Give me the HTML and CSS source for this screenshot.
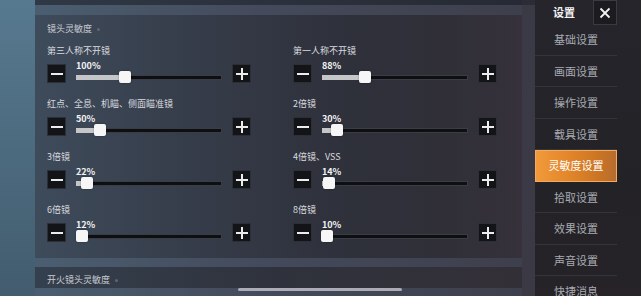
FILE: index.html
```html
<!DOCTYPE html>
<html lang="zh">
<head>
<meta charset="utf-8">
<link rel="stylesheet" href="styles.css">
</head>
<body>
<div class="edge"></div>
<main class="main">
  <div class="prev"></div>
  <section class="panel">
    <h2 class="title">镜头灵敏度<span class="dot"></span></h2>
    <div class="grid">
      <div class="row">
        <div class="label">第三人称不开镜</div>
        <div class="ctrl">
          <div class="btn minus"></div>
          <div class="slider"><div class="val">100%</div><div class="track"><div class="fill" style="width:33.3%"></div><div class="thumb" style="left:33.3%"></div></div></div>
          <div class="btn plus"></div>
        </div>
      </div>
      <div class="row">
        <div class="label">第一人称不开镜</div>
        <div class="ctrl">
          <div class="btn minus"></div>
          <div class="slider"><div class="val">88%</div><div class="track"><div class="fill" style="width:29.3%"></div><div class="thumb" style="left:29.3%"></div></div></div>
          <div class="btn plus"></div>
        </div>
      </div>
      <div class="row">
        <div class="label">红点、全息、机瞄、侧面瞄准镜</div>
        <div class="ctrl">
          <div class="btn minus"></div>
          <div class="slider"><div class="val">50%</div><div class="track"><div class="fill" style="width:16.7%"></div><div class="thumb" style="left:16.7%"></div></div></div>
          <div class="btn plus"></div>
        </div>
      </div>
      <div class="row">
        <div class="label">2倍镜</div>
        <div class="ctrl">
          <div class="btn minus"></div>
          <div class="slider"><div class="val">30%</div><div class="track"><div class="fill" style="width:10%"></div><div class="thumb" style="left:10%"></div></div></div>
          <div class="btn plus"></div>
        </div>
      </div>
      <div class="row">
        <div class="label">3倍镜</div>
        <div class="ctrl">
          <div class="btn minus"></div>
          <div class="slider"><div class="val">22%</div><div class="track"><div class="fill" style="width:7.3%"></div><div class="thumb" style="left:7.3%"></div></div></div>
          <div class="btn plus"></div>
        </div>
      </div>
      <div class="row">
        <div class="label">4倍镜、VSS</div>
        <div class="ctrl">
          <div class="btn minus"></div>
          <div class="slider"><div class="val">14%</div><div class="track"><div class="fill" style="width:4.7%"></div><div class="thumb" style="left:4.7%"></div></div></div>
          <div class="btn plus"></div>
        </div>
      </div>
      <div class="row">
        <div class="label">6倍镜</div>
        <div class="ctrl">
          <div class="btn minus"></div>
          <div class="slider"><div class="val">12%</div><div class="track"><div class="fill" style="width:4%"></div><div class="thumb" style="left:4%"></div></div></div>
          <div class="btn plus"></div>
        </div>
      </div>
      <div class="row">
        <div class="label">8倍镜</div>
        <div class="ctrl">
          <div class="btn minus"></div>
          <div class="slider"><div class="val">10%</div><div class="track"><div class="fill" style="width:3.3%"></div><div class="thumb" style="left:3.3%"></div></div></div>
          <div class="btn plus"></div>
        </div>
      </div>
    </div>
  </section>
  <section class="panel2">
    <h2 class="title">开火镜头灵敏度<span class="dot"></span></h2>
  </section>
</main>
<div class="strip"></div>
<aside class="side">
  <div class="side-head">
    <div class="side-title">设置</div>
    <div class="close">
      <svg width="12" height="12" viewBox="0 0 12 12"><path d="M1.5 1.5 L10.5 10.5 M10.5 1.5 L1.5 10.5" stroke="#f2f2f2" stroke-width="1.8" fill="none"/></svg>
    </div>
  </div>
  <ul class="menu">
    <li>基础设置</li>
    <li>画面设置</li>
    <li>操作设置</li>
    <li>载具设置</li>
    <li class="active">灵敏度设置</li>
    <li>拾取设置</li>
    <li>效果设置</li>
    <li>声音设置</li>
    <li>快捷消息</li>
  </ul>
</aside>
<div class="home-bar"></div>
</body>
</html>
```

FILE: styles.css
```css
html, body {
  margin: 0;
  padding: 0;
}
body {
  width: 641px;
  height: 296px;
  overflow: hidden;
  position: relative;
  display: grid;
  grid-template-columns: 35px 487px 13px 106px;
  background: linear-gradient(180deg, #56778d 0%, #4a677b 50%, #3f5668 100%);
  font-family: "Noto Sans CJK SC", "Noto Sans", sans-serif;
}
.edge {
  background: linear-gradient(180deg, #57798f 0%, #4c6a7e 50%, #425b6d 100%);
}
.main {
  display: flex;
  flex-direction: column;
  background: linear-gradient(90deg, #4b5e71 0%, #444b5c 45%, #3e3f4c 100%);
}
.prev {
  height: 5px;
  background: linear-gradient(90deg, #2f3845, #272a34);
}
.panel {
  margin-top: 10px;
  height: 243px;
  box-sizing: border-box;
  padding: 8px 0 0 12px;
  background: linear-gradient(90deg, #3e4b5b 0%, #353b48 35%, #2e303a 65%, #302f38 85%, #36313a 100%);
}
.title {
  margin: 0;
  font-size: 9px;
  line-height: 12px;
  font-weight: 400;
  color: #c9ccd2;
  display: flex;
  align-items: center;
  gap: 5px;
}
.dot {
  width: 3px;
  height: 3px;
  border-radius: 50%;
  background: #5f6774;
}
.grid {
  margin-top: 10px;
  display: grid;
  grid-template-columns: 204px 204px;
  column-gap: 42px;
  row-gap: 15px;
}
.label {
  font-size: 9px;
  line-height: 12px;
  color: #d8dadf;
}
.ctrl {
  margin-top: 7px;
  height: 19px;
  display: flex;
  gap: 10px;
}
.btn {
  flex: none;
  width: 19px;
  height: 19px;
  box-sizing: border-box;
  background: #131418;
  border: 1px solid #2c2f36;
  position: relative;
}
.minus::before,
.plus::before {
  content: "";
  position: absolute;
  left: 2.5px;
  top: 7.5px;
  width: 12px;
  height: 2px;
  background: #ececec;
}
.plus::after {
  content: "";
  position: absolute;
  left: 7.5px;
  top: 2.5px;
  width: 2px;
  height: 12px;
  background: #ececec;
}
.slider {
  width: 146px;
  display: flex;
  flex-direction: column;
}
.val {
  margin-top: -3px;
  font-size: 9px;
  line-height: 10px;
  font-weight: 700;
  color: #f2f2f2;
}
.track {
  margin-top: 4px;
  height: 5px;
  position: relative;
  background: #0e0f12;
  box-shadow: inset 0 0 0 1px #3a3d44;
}
.fill {
  height: 100%;
  background: #c5c6c8;
}
.thumb {
  position: absolute;
  top: -4px;
  width: 12px;
  height: 12px;
  margin-left: -6px;
  border-radius: 2px;
  background: #f6f6f6;
  box-shadow: 0 0 2px rgba(0, 0, 0, 0.4);
}
.panel2 {
  margin-top: 9px;
  height: 21px;
  box-sizing: border-box;
  padding: 7px 0 0 12px;
  background: linear-gradient(90deg, #35404e 0%, #2f323c 50%, #332f37 100%);
}
.strip {
  background: linear-gradient(180deg, #2b2c35 0px, #2b2c35 5px, #3a3a47 5px, #3b3944 100%);
}
.side {
  background: linear-gradient(180deg, #25252b 0%, #232227 60%, #272328 100%);
}
.side-head {
  width: 82px;
  height: 24px;
  display: flex;
}
.side-title {
  flex: 1;
  text-align: center;
  font-size: 11px;
  line-height: 24px;
  font-weight: 700;
  color: #f2f2f2;
}
.close {
  width: 24px;
  height: 25px;
  box-sizing: border-box;
  background: #1b1b20;
  border: 1px solid #3a3a41;
  display: flex;
  align-items: center;
  justify-content: center;
}
.menu {
  list-style: none;
  margin: 0;
  padding: 0;
  width: 82px;
}
.menu li {
  height: 31.5px;
  box-sizing: border-box;
  line-height: 31px;
  text-align: center;
  font-size: 11px;
  color: #a8abb2;
  border-bottom: 1px solid #34353b;
}
.menu li.active {
  color: #ffffff;
  border: 1px solid #f3ab62;
  background: linear-gradient(90deg, #f29a3a 0%, #e0842a 45%, #c97424 80%, #b66c2e 100%);
  line-height: 29.5px;
}
.home-bar {
  position: absolute;
  left: 238px;
  top: 288px;
  width: 164px;
  height: 3px;
  border-radius: 2px;
  background: rgba(205, 205, 212, 0.75);
}
```
